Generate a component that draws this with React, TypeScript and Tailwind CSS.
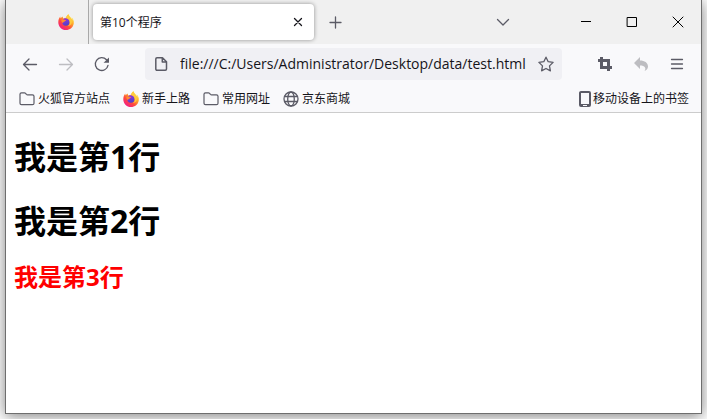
import React from "react";

const Firefox = () => (
  <svg className="size-4 shrink-0" viewBox="0 0 16 16" aria-hidden="true">
    <defs>
      <linearGradient id="flame" x1="0.85" y1="0.1" x2="0.2" y2="0.95">
        <stop offset="0" stopColor="#fff34f" />
        <stop offset="0.35" stopColor="#ffa52a" />
        <stop offset="0.65" stopColor="#ff4a3c" />
        <stop offset="1" stopColor="#f0198c" />
      </linearGradient>
      <linearGradient id="globe" x1="0.3" y1="0" x2="0.6" y2="1">
        <stop offset="0" stopColor="#9a35dd" />
        <stop offset="1" stopColor="#4a41c9" />
      </linearGradient>
    </defs>
    <path
      fill="url(#flame)"
      d="M15.2 5.6c-.3-.8-1-1.700-1.600-2 .5 1 .8 1.900.9 2.600C13.600 4 12 3 10.900 1.200L10.500.3c-1.500.9-2.300 2.500-2.500 3.500-.9.050-1.800.3-2.600.7C4.800 4 4.700 3.200 4.900 2.500 3.900 3 3.200 3.700 2.700 4.300 2.300 3.900 2.400 2.700 2.400 2.500 1.200 3.600.4 5.900.3 7.900.1 12.300 3.600 16 8 16c3.900 0 7.200-2.800 7.800-6.600.2-1.400 0-2.700-.6-3.800z"
    />
    <circle cx="7.900" cy="8" r="3.700" fill="url(#globe)" />
    <path fill="#ff8a30" d="M3.400 5.800c.9-.7 2-.8 3 0 .7.200 1.300.2 1.700.3 0 .6-.9.900-1.400 1.100-.4.200-.4.600-.6 1-.9-.2-1.500.2-1.300 1-1.100-.6-1.500-1.900-1.400-3.400z" />
    <path fill="#ffcb3d" d="M8.100 3.800c1.400.9 3.300 2 3.700 4.100.3 1.800-.5 3.300-1.900 4 3.300-.2 4.600-3.300 3.700-5.700-.7-1.800-2.300-2.800-3.100-5.900-1.500.9-2.300 2.500-2.400 3.500z" />
  </svg>
);

const Folder = () => (
  <svg className="size-4 shrink-0" viewBox="0 0 16 16" fill="none" stroke="#5b5b66" strokeWidth="1.200" aria-hidden="true">
    <path d="M1 12.200V3.300C1 2.400 1.700 1.800 2.500 1.800h3c.5 0 .8.200 1.100.5l.8 1c.3.300.6.500 1.100.5h4.900c.9 0 1.600.7 1.600 1.500v6.900c0 .9-.7 1.500-1.500 1.500h-11c-.8 0-1.500-.6-1.500-1.500z" />
  </svg>
);

const Globe = () => (
  <svg className="size-4 shrink-0" viewBox="0 0 16 16" fill="none" stroke="#5b5b66" strokeWidth="1.300" aria-hidden="true">
    <circle cx="8" cy="8" r="7" />
    <ellipse cx="8" cy="8" rx="3.300" ry="7" />
    <path d="M1.500 5.500h13M1.500 10.500h13" />
  </svg>
);

const Phone = () => (
  <svg className="h-4 w-3 shrink-0" viewBox="0 0 12 16" aria-hidden="true">
    <path fill="#5b5b66" fillRule="evenodd" d="M2 0h8a2 2 0 0 1 2 2v12a2 2 0 0 1-2 2H2a2 2 0 0 1-2-2V2C0 .9.900 0 2 0zm0 2v11h8V2zM4 14v1h4v-1z" />
  </svg>
);

type IconButtonProps = { label: string; className: string; children: React.ReactNode; disabled?: boolean };

const IconButton = ({ label, className, children, disabled }: IconButtonProps) => (
  <button type="button" aria-label={label} disabled={disabled} className={`flex shrink-0 items-center justify-center ${className}`}>
    <svg
      className="size-4"
      viewBox="0 0 16 16"
      fill="none"
      stroke="currentColor"
      strokeWidth="1.300"
      strokeLinecap="round"
      strokeLinejoin="round"
      aria-hidden="true"
    >
      {children}
    </svg>
  </button>
);

const Bookmark = ({ icon, label }: { icon: React.ReactNode; label: string }) => (
  <a href="#" className="flex shrink-0 items-center gap-[3px]">
    {icon}
    {label}
  </a>
);

export default function App() {
  return (
    <div className="flex h-screen overflow-hidden bg-white px-[5px] pb-[5px] font-['Open_Sans','Noto_Sans_CJK_SC',sans-serif] text-[#15141a]">
      <div className="flex min-w-0 flex-1 flex-col border-x border-b border-[#6e6e6e] bg-white shadow-[0_2px_14px_rgba(0,0,0,0.5)]">
        <header className="flex h-11 shrink-0 items-center bg-[#f0f0f0]">
          <div className="flex h-full w-[83px] shrink-0 items-center justify-end border-r border-[#a9a9a9] pr-[14px]">
            <Firefox />
          </div>
          <div className="ml-1 flex h-9 w-[221px] shrink-0 items-center justify-between rounded bg-white pr-2 pl-[7px] text-xs shadow-[0_0_4px_rgba(0,0,0,0.4)]">
            <span className="pt-0.5">第10个程序</span>
            <IconButton label="关闭标签页" className="size-4 text-[#15141a]">
              <path d="M4.500 4.500l7 7M11.500 4.500l-7 7" />
            </IconButton>
          </div>
          <IconButton label="新建标签页" className="ml-[5px] size-8 text-[#5b5b66]">
            <path d="M8.500 3v11M3 8.500h11" />
          </IconButton>
          <div className="flex-1" />
          <IconButton label="列出所有标签页" className="mr-11 size-8 text-[#5b5b66]">
            <path d="M2.500 5.500L8 11l5.500-5.500" />
          </IconButton>
          <IconButton label="最小化" className="h-full w-[46px] text-black">
            <path strokeLinecap="butt" strokeWidth="1" d="M3 7.500h10" />
          </IconButton>
          <IconButton label="最大化" className="h-full w-[46px] text-black">
            <path strokeLinejoin="miter" strokeWidth="1" d="M3.500 3.500h9v9h-9z" />
          </IconButton>
          <IconButton label="关闭" className="h-full w-[46px] text-black">
            <path strokeWidth="1" d="M3 3l10 10M13 3L3 13" />
          </IconButton>
        </header>

        <nav className="flex h-10 shrink-0 items-center bg-[#f9f9fb] px-[6px]">
          <IconButton label="后退" className="size-9 text-[#5b5b66]">
            <path d="M14.500 8.500H1.500M7 3L1.500 8.500 7 14" />
          </IconButton>
          <IconButton label="前进" className="size-9 text-[#bdbdc1]" disabled>
            <path d="M1.500 8.500h13M9 3l5.500 5.500L9 14" />
          </IconButton>
          <IconButton label="刷新" className="size-9 text-[#5b5b66]">
            <path d="M14 9.300A6.400 6.400 0 1 1 12.500 3.800" />
            <path fill="currentColor" stroke="none" d="M15 1.500v5.200h-5.400z" />
          </IconButton>
          <div className="ml-[25px] flex h-8 min-w-0 flex-1 items-center rounded bg-[#f0f0f4] pl-2">
            <svg className="size-4 shrink-0" viewBox="0 0 16 16" fill="none" stroke="#5b5b66" strokeWidth="1.500" strokeLinejoin="round" aria-hidden="true">
              <path d="M4 1.800h5.500l4 4V13c0 .7-.6 1.200-1.200 1.200H4c-.7 0-1.200-.5-1.200-1.200V3c0-.7.500-1.200 1.200-1.200zM9.300 2v4h4" />
            </svg>
            <input
              aria-label="网址"
              className="ml-[11px] min-w-0 flex-1 bg-transparent text-sm leading-6 outline-none"
              defaultValue="file:///C:/Users/Administrator/Desktop/data/test.html"
            />
            <IconButton label="添加书签" className="h-8 w-8 text-[#5b5b66]">
              <path d="M8 1.200l2.200 4.500 4.900.7-3.600 3.500.9 4.900L8 12.500l-4.400 2.300.9-4.900L.9 6.400l4.900-.7z" />
            </IconButton>
          </div>
          <IconButton label="截图" className="ml-[25px] size-9 text-[#5b5b66]">
            <path strokeLinecap="butt" strokeLinejoin="miter" strokeWidth="3" d="M4.500 1v10.500H15M1 4.500h10.500V15" />
          </IconButton>
          <IconButton label="撤销" className="size-9 text-[#bdbdc1]" disabled>
            <path fill="currentColor" stroke="none" d="M7 1v3.500c4.500 0 8 2.200 8 6 0 2-1.400 4-3.500 4.500 2-3 .5-5.500-4.500-5.500V13L1 7z" />
          </IconButton>
          <IconButton label="菜单" className="size-9 text-[#5b5b66]">
            <path d="M2.500 3.500h11M2.500 8h11M2.500 12.500h11" />
          </IconButton>
        </nav>

        <div className="flex h-[29px] shrink-0 items-center gap-[13px] border-b border-[#cccccc] bg-[#f9f9fb] pt-0.5 pr-3 pl-[13px] text-xs">
          <Bookmark icon={<Folder />} label="火狐官方站点" />
          <Bookmark icon={<Firefox />} label="新手上路" />
          <Bookmark icon={<Folder />} label="常用网址" />
          <Bookmark icon={<Globe />} label="京东商城" />
          <a href="#" className="ml-auto flex shrink-0 items-center gap-0.5">
            <Phone />
            移动设备上的书签
          </a>
        </div>

        <main className="flex min-h-0 flex-1 flex-col overflow-auto px-2 pt-[22px] font-bold text-black">
          <h1 className="text-[32px] leading-[44px]">我是第1行</h1>
          <h1 className="mt-5 text-[32px] leading-[44px]">我是第2行</h1>
          <h2 className="mt-[18px] text-2xl leading-8 text-[#ff0000]">我是第3行</h2>
        </main>
      </div>
    </div>
  );
}
